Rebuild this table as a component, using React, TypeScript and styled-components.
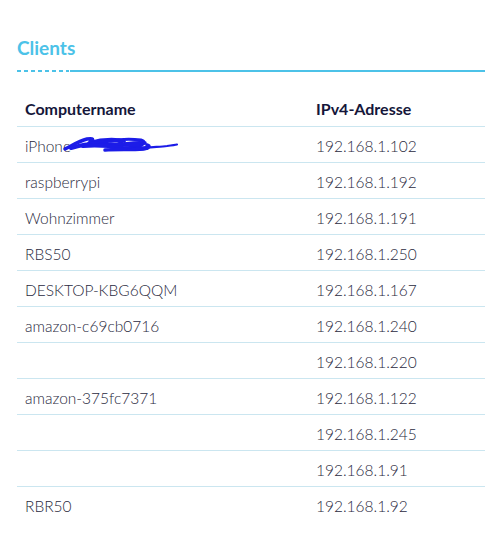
import React from "react";
import styled, { createGlobalStyle } from "styled-components";

type Client = {
  name: string;
  ip: string;
  redacted?: boolean;
};

const CLIENTS: Client[] = [
  { name: "iPhone", ip: "192.168.1.102", redacted: true },
  { name: "raspberrypi", ip: "192.168.1.192" },
  { name: "Wohnzimmer", ip: "192.168.1.191" },
  { name: "RBS50", ip: "192.168.1.250" },
  { name: "DESKTOP-KBG6QQM", ip: "192.168.1.167" },
  { name: "amazon-c69cb0716", ip: "192.168.1.240" },
  { name: "", ip: "192.168.1.220" },
  { name: "amazon-375fc7371", ip: "192.168.1.122" },
  { name: "", ip: "192.168.1.245" },
  { name: "", ip: "192.168.1.91" },
  { name: "RBR50", ip: "192.168.1.92" },
];

const ACCENT = "#4cc2e8";
const ROW_LINE = "#cbe6f0";

const GlobalStyle = createGlobalStyle`
  html, body {
    margin: 0;
    padding: 0;
    background: #ffffff;
  }
  body {
    font-family: Lato, "Open Sans", sans-serif;
  }
`;

const Page = styled.div`
  padding: 37px 0 0 17px;
`;

const Title = styled.h2`
  margin: 0;
  font-size: 19px;
  font-weight: 700;
  line-height: 22px;
  color: ${ACCENT};
`;

const TitleRule = styled.div`
  display: flex;
  margin-top: 11px;
  height: 2px;
`;

const DashedPart = styled.div`
  width: 52px;
  height: 2px;
  background: repeating-linear-gradient(
    to right,
    ${ACCENT} 0 4px,
    transparent 4px 7px
  );
`;

const SolidPart = styled.div`
  flex: 1;
  height: 2px;
  margin-left: 1px;
  background: ${ACCENT};
`;

const Table = styled.div`
  margin-top: 19px;
  display: flex;
  flex-direction: column;
`;

const Row = styled.div<{ $last?: boolean }>`
  display: grid;
  grid-template-columns: 291px 1fr;
  height: 36px;
  align-items: center;
  border-bottom: 1px solid ${(p) => (p.$last ? "transparent" : ROW_LINE)};
  box-sizing: border-box;
`;

const HeadCell = styled.div`
  padding-left: 8px;
  font-size: 16px;
  font-weight: 700;
  color: #15163a;
`;

const Cell = styled.div`
  position: relative;
  padding-left: 8px;
  padding-top: 2px;
  font-size: 15.5px;
  font-weight: 300;
  color: #2a2a40;
  white-space: nowrap;
`;

// hand-drawn redaction over the device name
const Scribble = styled.svg`
  position: absolute;
  left: 44px;
  top: -2px;
  width: 120px;
  height: 24px;
  pointer-events: none;
`;

function Redaction() {
  return (
    <Scribble viewBox="0 0 120 24">
      <g
        fill="none"
        stroke="#1c1ce8"
        strokeLinecap="round"
        strokeLinejoin="round"
      >
        <path
          strokeWidth="3.5"
          d="M4 16 C12 12 18 8 26 6 C32 5 34 6 28 10 C38 7 48 6 58 7 C64 8 58 12 50 14 C62 11 74 9 84 10"
        />
        <path strokeWidth="4" d="M10 15 C22 11 34 10 46 11 C58 12 68 12 80 12" />
        <path strokeWidth="4" d="M22 13 C36 12 50 13 62 15 C70 16 78 16 86 15" />
        <path strokeWidth="3" d="M50 8 C60 6 70 6 80 7 C84 8 84 11 80 12" />
        <path strokeWidth="3.5" d="M44 17 C56 16 70 17 82 16 C88 15 90 13 86 12" />
        <path strokeWidth="2.2" d="M66 17 C80 15 96 14 106 13 C110 12.5 114 12 116 11.5" />
        <path strokeWidth="2" d="M30 10 C42 8 54 8 64 9" />
      </g>
    </Scribble>
  );
}

export default function App() {
  return (
    <>
      <GlobalStyle />
      <Page>
        <Title>Clients</Title>
        <TitleRule>
          <DashedPart />
          <SolidPart />
        </TitleRule>
        <Table>
          <Row>
            <HeadCell>Computername</HeadCell>
            <HeadCell>IPv4-Adresse</HeadCell>
          </Row>
          {CLIENTS.map((client, index) => (
            <Row key={client.ip} $last={index === CLIENTS.length - 1}>
              <Cell>
                {client.name}
                {client.redacted && <Redaction />}
              </Cell>
              <Cell>{client.ip}</Cell>
            </Row>
          ))}
        </Table>
      </Page>
    </>
  );
}
